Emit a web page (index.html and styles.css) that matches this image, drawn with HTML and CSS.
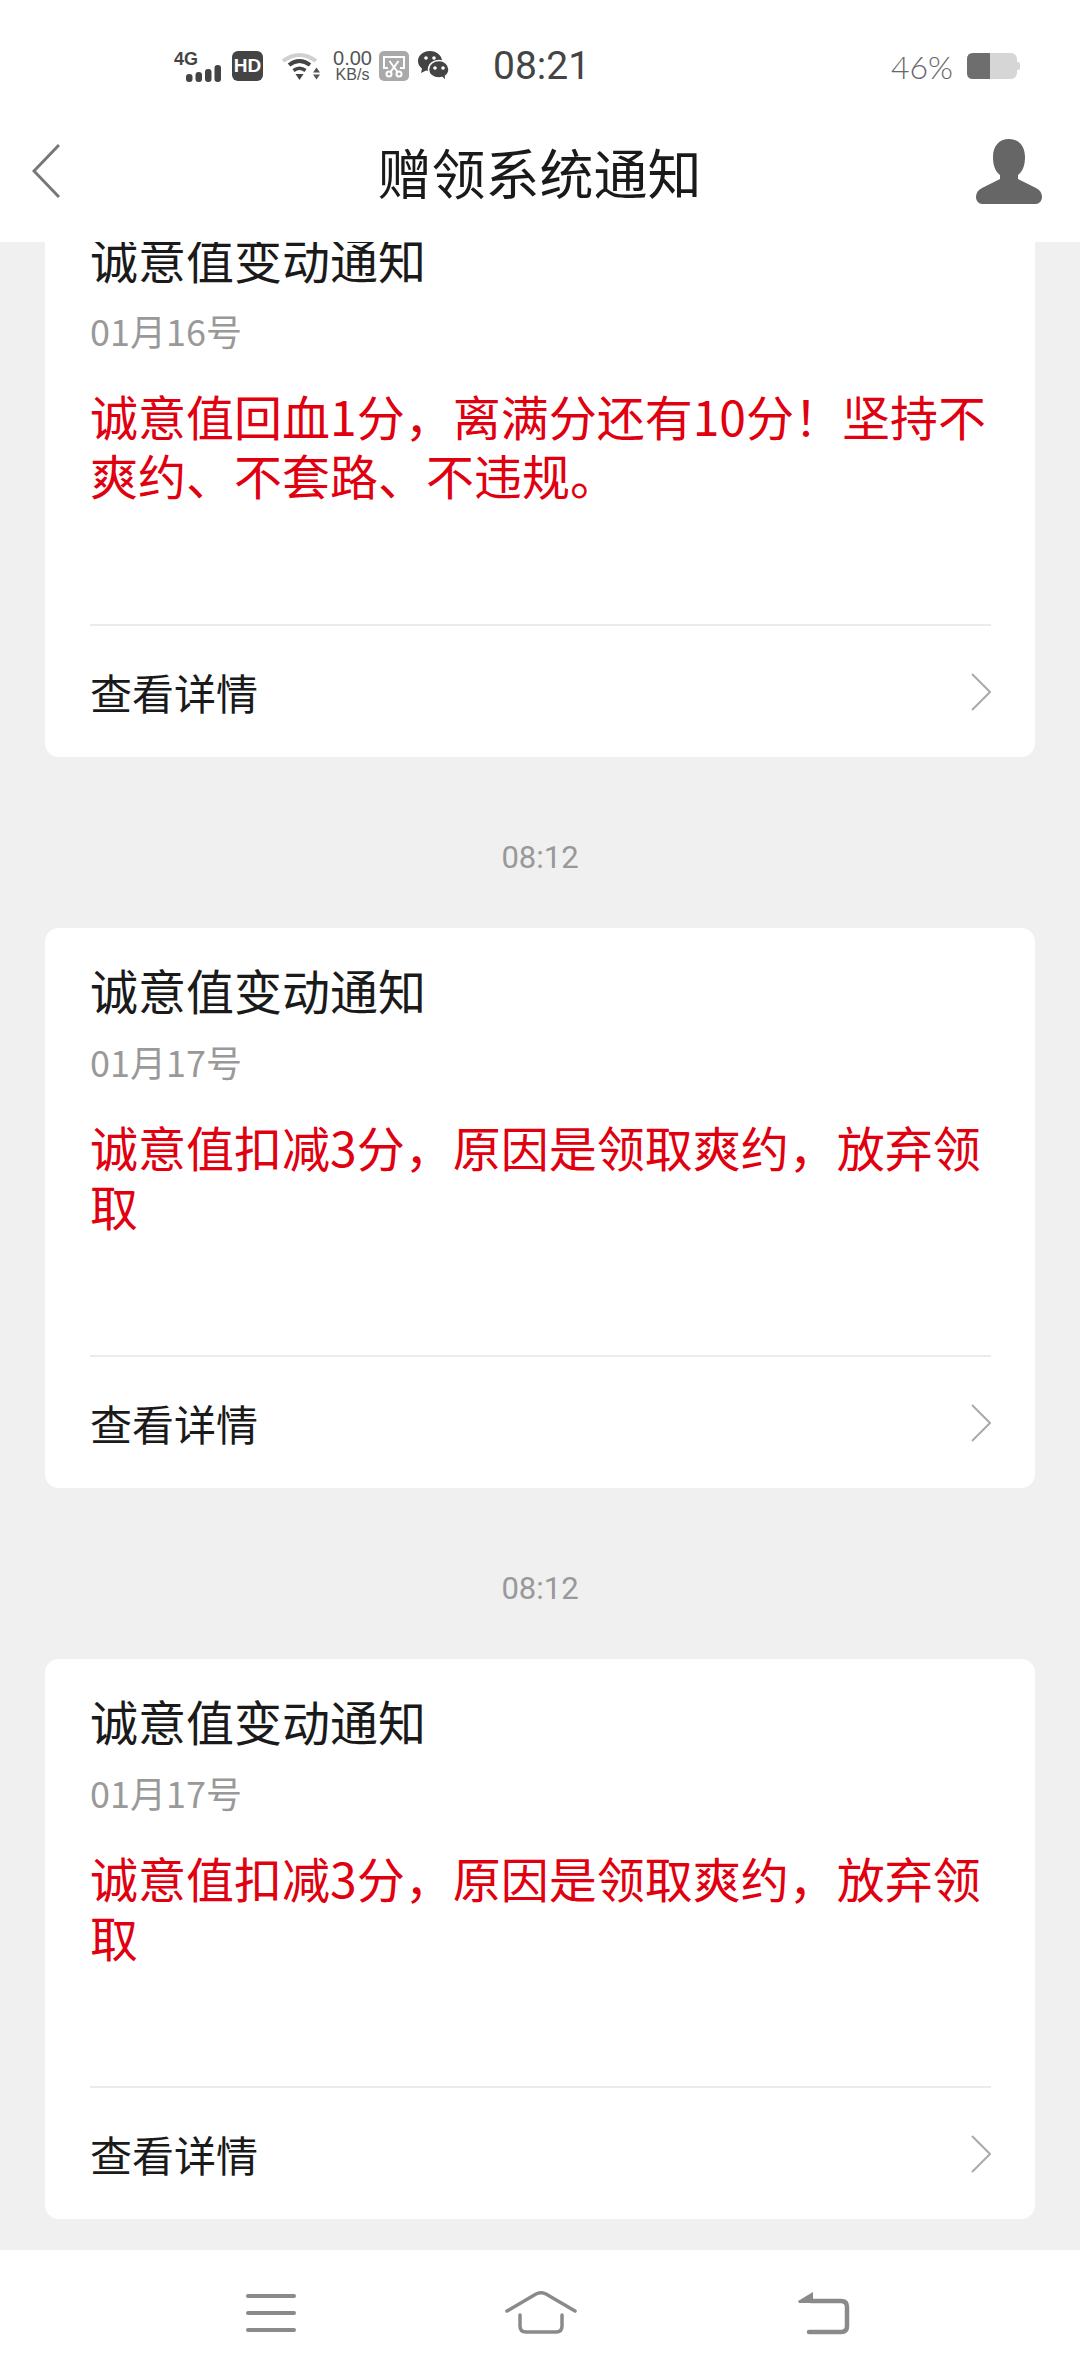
FILE: index.html
```html
<!DOCTYPE html>
<html lang="zh">
<head>
    <meta charset="UTF-8">
    <meta name="viewport" content="width=device-width, initial-scale=1.0">
    <title>赠领系统通知</title>
    <link rel="stylesheet" href="styles.css">
</head>
<body>
    <div class="page">
        <div class="top-area">
            <div class="status-bar">
                <div class="status-left">
                    <svg class="icon-signal" width="47" height="33" viewBox="0 0 47 33">
                        <text x="0" y="15" class="signal-text">4G</text>
                        <rect x="12" y="24" width="6.500" height="8" rx="3" fill="#444"/>
                        <rect x="21.500" y="22" width="6.500" height="10" rx="3" fill="#444"/>
                        <rect x="31" y="19" width="6.500" height="13" rx="3" fill="#444"/>
                        <rect x="40.500" y="15" width="6.500" height="17" rx="3" fill="#444"/>
                    </svg>
                    <div class="hd-badge">HD</div>
                    <svg class="icon-wifi" width="38" height="28" viewBox="0 0 38 28">
                        <path d="M1 9 Q17.500 -3 34 9" fill="none" stroke="#d0d0d0" stroke-width="4"/>
                        <path d="M7 13 Q17.500 5 28 13" fill="none" stroke="#444" stroke-width="4"/>
                        <path d="M11.500 18.500 Q17.500 14 23.500 18.500" fill="none" stroke="#444" stroke-width="3.500"/>
                        <path d="M13.500 22 H21.500 L17.500 28 Z" fill="#444"/>
                        <path d="M31 20.500 H38 L34.500 15.500 Z" fill="#555"/>
                        <path d="M31 22.500 H38 L34.500 27.500 Z" fill="#555"/>
                    </svg>
                    <div class="net-speed">
                        <span class="speed-num">0.00</span>
                        <span class="speed-unit">KB/s</span>
                    </div>
                    <div class="shot-badge">
                        <svg width="30" height="30" viewBox="0 0 30 30" fill="none" stroke="#fff" stroke-width="2">
                            <path d="M9 17 H5 V6 H25 V17 H21"/>
                            <path d="M19.500 10 L11.500 21 M10.500 10 L18.500 21"/>
                            <circle cx="10" cy="23" r="2.500"/>
                            <circle cx="20" cy="23" r="2.500"/>
                        </svg>
                    </div>
                    <svg class="icon-wechat" width="31" height="30" viewBox="0 0 31 30">
                        <path d="M12 0 C5 0 0 4.500 0 10 C0 13 1.500 15.500 4 17.500 L3 22 L8 19.500 C9.500 20 10.500 20 12 20 C18.500 20 24 15.500 24 10 C24 4.500 18.500 0 12 0 Z" fill="#444"/>
                        <path d="M21 9.500 C15 9.500 10.500 13.500 10.500 18.500 C10.500 23.500 15 27 21 27 C22 27 23 27 24 26.500 L28 30 L27.500 25 C29.500 23.500 31 21 31 18.500 C31 13.500 26.500 9.500 21 9.500 Z" fill="#444" stroke="#fff" stroke-width="1.500"/>
                        <circle cx="8" cy="7" r="1.800" fill="#fff"/>
                        <circle cx="16" cy="7" r="1.800" fill="#fff"/>
                        <circle cx="17" cy="17" r="1.800" fill="#fff"/>
                        <circle cx="25" cy="17" r="1.800" fill="#fff"/>
                    </svg>
                    <div class="clock">08:21</div>
                </div>
                <div class="status-right">
                    <span class="battery-text">46%</span>
                    <svg class="battery" width="53" height="26" viewBox="0 0 53 26">
                        <rect x="0" y="0" width="50" height="26" rx="6" fill="#D6D6D6"/>
                        <path d="M6 0 H23 V26 H6 Q0 26 0 20 V6 Q0 0 6 0 Z" fill="#6E6E6E"/>
                        <path d="M50 9 H51 Q53 9 53 11 V15 Q53 17 51 17 H50 Z" fill="#D6D6D6"/>
                    </svg>
                </div>
            </div>
            <div class="nav-bar">
                <svg class="back-icon" width="28" height="54" viewBox="0 0 28 54" fill="none" stroke="#777" stroke-width="3">
                    <path d="M27 1 L2 27 L27 53"/>
                </svg>
                <h1 class="page-title">赠领系统通知</h1>
                <svg class="user-icon" width="66" height="65" viewBox="0 0 66 65" fill="#666">
                    <path d="M33 0 C43 0 49 7 49 18 C49 26 47 32 42 36 L42 40 L60 49 C64 51 66 54 66 58 C66 62 63 65 60 65 H6 C3 65 0 62 0 58 C0 54 2 51 6 49 L24 40 L24 36 C19 32 17 26 17 18 C17 7 23 0 33 0 Z"/>
                </svg>
            </div>
        </div>

        <div class="message-list">
            <div class="message">
                <div class="card">
                    <div class="card-body">
                        <div class="card-title">诚意值变动通知</div>
                        <div class="card-date">01月16号</div>
                        <div class="card-text">诚意值回血1分，离满分还有10分！坚持不爽约、不套路、不违规。</div>
                    </div>
                    <div class="card-footer">
                        <span>查看详情</span>
                        <svg class="arrow" width="20" height="38" viewBox="0 0 20 38" fill="none" stroke="#aaa" stroke-width="2">
                            <path d="M1 1 L19 19 L1 37"/>
                        </svg>
                    </div>
                </div>
            </div>
            <div class="message">
                <div class="msg-time">08:12</div>
                <div class="card">
                    <div class="card-body">
                        <div class="card-title">诚意值变动通知</div>
                        <div class="card-date">01月17号</div>
                        <div class="card-text">诚意值扣减3分，原因是领取爽约，放弃领取</div>
                    </div>
                    <div class="card-footer">
                        <span>查看详情</span>
                        <svg class="arrow" width="20" height="38" viewBox="0 0 20 38" fill="none" stroke="#aaa" stroke-width="2">
                            <path d="M1 1 L19 19 L1 37"/>
                        </svg>
                    </div>
                </div>
            </div>
            <div class="message">
                <div class="msg-time">08:12</div>
                <div class="card">
                    <div class="card-body">
                        <div class="card-title">诚意值变动通知</div>
                        <div class="card-date">01月17号</div>
                        <div class="card-text">诚意值扣减3分，原因是领取爽约，放弃领取</div>
                    </div>
                    <div class="card-footer">
                        <span>查看详情</span>
                        <svg class="arrow" width="20" height="38" viewBox="0 0 20 38" fill="none" stroke="#aaa" stroke-width="2">
                            <path d="M1 1 L19 19 L1 37"/>
                        </svg>
                    </div>
                </div>
            </div>
        </div>

        <div class="bottom-bar">
            <svg width="52" height="38" viewBox="0 0 52 38" fill="none" stroke="#8a8a8a" stroke-width="4" stroke-linecap="round">
                <path d="M3 2 H49 M3 19 H49 M3 36 H49"/>
            </svg>
            <svg class="nav-home" width="72" height="44" viewBox="0 0 72 44" fill="none" stroke="#8a8a8a" stroke-width="3.500" stroke-linecap="round">
                <path d="M2 20 L31 3 Q36 0.500 41 3 L70 20"/>
                <path d="M15 24 V35 Q15 41 21 41 H51 Q57 41 57 35 V24"/>
            </svg>
            <svg class="nav-return" width="52" height="44" viewBox="0 0 52 44" fill="none" stroke="#8a8a8a" stroke-width="4.500" stroke-linecap="round">
                <path d="M13 10 H43 Q49 10 49 16 V35 Q49 41 43 41 H11"/>
                <path d="M0 10 L15 1 V12 H1 Z" fill="#8a8a8a" stroke="none"/>
            </svg>
        </div>
    </div>
</body>
</html>
```

FILE: styles.css
```css
* {
    margin: 0;
    padding: 0;
    box-sizing: border-box;
}

body {
    width: 1080px;
    height: 2376px;
    overflow: hidden;
    background: #F0F0F0;
    font-family: "Noto Sans CJK SC", Roboto, sans-serif;
    color: #1A1A1A;
}

.page {
    height: 100%;
    display: flex;
    flex-direction: column;
}

.top-area {
    height: 242px;
    background: #FFFFFF;
    position: relative;
    z-index: 2;
    flex-shrink: 0;
}

.status-bar {
    height: 100px;
    padding: 32px 60px 0 174px;
    display: flex;
    justify-content: space-between;
    align-items: center;
}

.status-left {
    display: flex;
    align-items: center;
}

.signal-text {
    font-family: "Liberation Sans", sans-serif;
    font-size: 18px;
    font-weight: 700;
    fill: #444;
}

.hd-badge {
    width: 31px;
    height: 30px;
    margin-left: 11px;
    background: #444;
    border-radius: 6px;
    color: #fff;
    font-family: "Liberation Sans", sans-serif;
    font-size: 19px;
    font-weight: 700;
    line-height: 30px;
    text-align: center;
}

.icon-wifi {
    margin-left: 19px;
}

.net-speed {
    width: 39px;
    margin-left: 13px;
    display: flex;
    flex-direction: column;
    align-items: center;
    font-family: "Liberation Sans", sans-serif;
    color: #555;
}

.speed-num {
    font-size: 20px;
    line-height: 17px;
}

.speed-unit {
    font-size: 16px;
    line-height: 16px;
}

.shot-badge {
    width: 30px;
    height: 30px;
    margin-left: 7px;
    background: #A9A9A9;
    border-radius: 5px;
}

.icon-wechat {
    margin-left: 9px;
}

.clock {
    margin-left: 44px;
    font-family: Roboto, sans-serif;
    font-size: 39px;
    color: #444;
}

.status-right {
    display: flex;
    align-items: center;
}

.battery-text {
    font-family: Lato, sans-serif;
    font-size: 32px;
    font-weight: 300;
    color: #666;
}

.battery {
    margin-left: 14px;
}

.nav-bar {
    height: 142px;
    padding: 0 38px 0 32px;
    display: grid;
    grid-template-columns: 1fr auto 1fr;
    align-items: center;
}

.user-icon {
    justify-self: end;
}

.page-title {
    margin-left: 5px;
    font-size: 54px;
    font-weight: 400;
    color: #1A1A1A;
}

.message-list {
    flex: 1;
    margin-top: -45px;
    padding: 0 45px;
    overflow: hidden;
}

.msg-time {
    height: 171px;
    padding-top: 30px;
    line-height: 141px;
    text-align: center;
    font-family: Roboto, sans-serif;
    font-size: 31px;
    color: #999;
}

.card {
    height: 560px;
    background: #FFFFFF;
    border-radius: 14px;
    display: flex;
    flex-direction: column;
}

.card-body {
    flex: 1;
    padding: 30px 45px 0;
}

.card-title {
    font-size: 48px;
    line-height: 62px;
}

.card-date {
    margin-top: 17px;
    font-size: 36px;
    line-height: 48px;
    color: #999;
}

.card-text {
    margin-top: 32px;
    font-size: 48px;
    line-height: 59px;
    color: #E0000F;
}

.card-footer {
    height: 133px;
    margin: 0 44px 0 45px;
    border-top: 2px solid #EBEBEB;
    display: flex;
    justify-content: space-between;
    align-items: center;
    font-size: 42px;
}

.bottom-bar {
    height: 126px;
    background: #FFFFFF;
    position: relative;
    z-index: 2;
    flex-shrink: 0;
    padding-left: 245px;
    display: flex;
    align-items: center;
}

.nav-home {
    margin-left: 208px;
}

.nav-return {
    margin-left: 221px;
}
```
